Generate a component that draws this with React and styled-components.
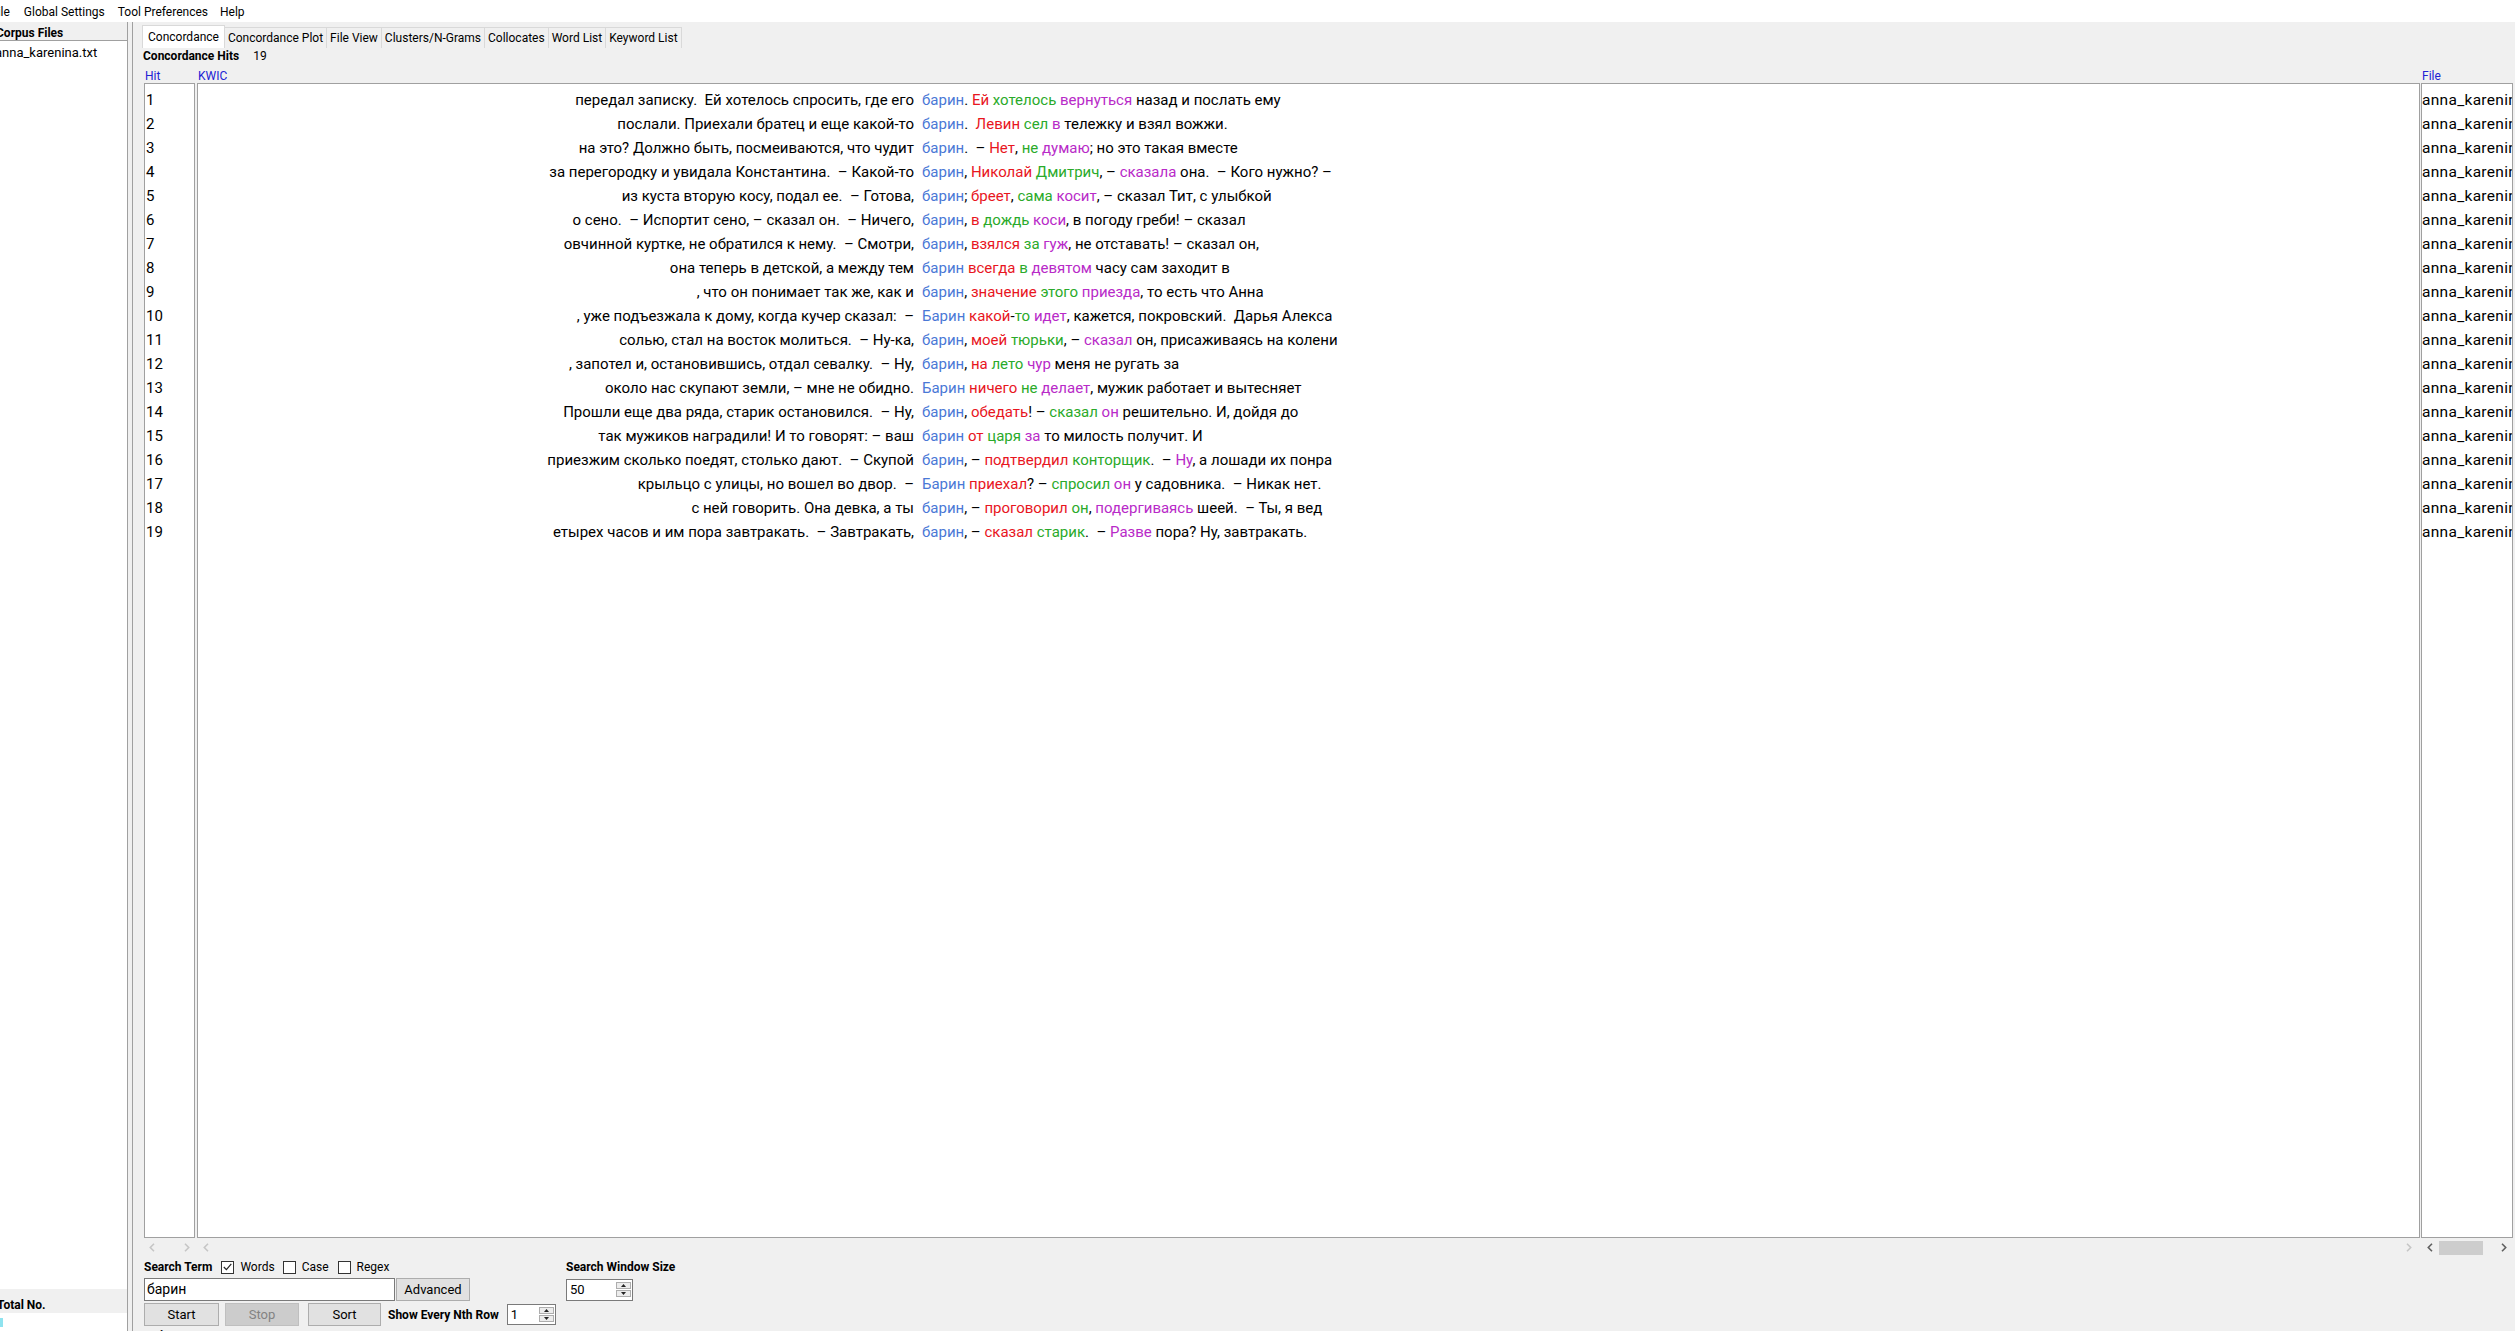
import React from 'react';
import styled, { createGlobalStyle } from 'styled-components';

const GlobalStyle = createGlobalStyle`
  * { box-sizing: border-box; }
  html, body { margin: 0; padding: 0; width: 2515px; height: 1331px; overflow: hidden; background: #f0f0f0; }
  body { font-family: Roboto, "Noto Sans", Arial, sans-serif; color: #000; }
  #root { height: 100%; }
`;

const C = {
  hit: '#4a78d6',
  r: '#e8161e',
  g: '#2aaa2a',
  m: '#b82ac8',
  head: '#2222d4',
};

const rows = [
  ['передал записку.  Ей хотелось спросить, где его', 'барин', '. [r:Ей] [g:хотелось] [m:вернуться] назад и послать ему'],
  ['послали. Приехали братец и еще какой-то', 'барин', '.  [r:Левин] [g:сел] [m:в] тележку и взял вожжи.'],
  ['на это? Должно быть, посмеиваются, что чудит', 'барин', '.  – [r:Нет], [g:не] [m:думаю]; но это такая вместе'],
  ['за перегородку и увидала Константина.  – Какой-то', 'барин', ', [r:Николай] [g:Дмитрич], – [m:сказала] она.  – Кого нужно? –'],
  ['из куста вторую косу, подал ее.  – Готова,', 'барин', '; [r:бреет], [g:сама] [m:косит], – сказал Тит, с улыбкой'],
  ['о сено.  – Испортит сено, – сказал он.  – Ничего,', 'барин', ', [r:в] [g:дождь] [m:коси], в погоду греби! – сказал'],
  ['овчинной куртке, не обратился к нему.  – Смотри,', 'барин', ', [r:взялся] [g:за] [m:гуж], не отставать! – сказал он,'],
  ['она теперь в детской, а между тем', 'барин', ' [r:всегда] [g:в] [m:девятом] часу сам заходит в'],
  [', что он понимает так же, как и', 'барин', ', [r:значение] [g:этого] [m:приезда], то есть что Анна'],
  [', уже подъезжала к дому, когда кучер сказал:  –', 'Барин', ' [r:какой]-[g:то] [m:идет], кажется, покровский.  Дарья Алекса'],
  ['солью, стал на восток молиться.  – Ну-ка,', 'барин', ', [r:моей] [g:тюрьки], – [m:сказал] он, присаживаясь на колени'],
  [', запотел и, остановившись, отдал севалку.  – Ну,', 'барин', ', [r:на] [g:лето] [m:чур] меня не ругать за'],
  ['около нас скупают земли, – мне не обидно.', 'Барин', ' [r:ничего] [g:не] [m:делает], мужик работает и вытесняет'],
  ['Прошли еще два ряда, старик остановился.  – Ну,', 'барин', ', [r:обедать]! – [g:сказал] [m:он] решительно. И, дойдя до'],
  ['так мужиков наградили! И то говорят: – ваш', 'барин', ' [r:от] [g:царя] [m:за] то милость получит. И'],
  ['приезжим сколько поедят, столько дают.  – Скупой', 'барин', ', – [r:подтвердил] [g:конторщик].  – [m:Ну], а лошади их понра'],
  ['крыльцо с улицы, но вошел во двор.  –', 'Барин', ' [r:приехал]? – [g:спросил] [m:он] у садовника.  – Никак нет.'],
  ['с ней говорить. Она девка, а ты', 'барин', ', – [r:проговорил] [g:он], [m:подергиваясь] шеей.  – Ты, я вед'],
  ['етырех часов и им пора завтракать.  – Завтракать,', 'барин', ', – [r:сказал] [g:старик].  – [m:Разве] пора? Ну, завтракать.'],
];

function parseRight(s) {
  const out = [];
  const re = /\[(r|g|m):([^\]]+)\]/g;
  let last = 0;
  let m;
  while ((m = re.exec(s))) {
    if (m.index > last) out.push({ t: s.slice(last, m.index) });
    out.push({ t: m[2], c: m[1] });
    last = re.lastIndex;
  }
  if (last < s.length) out.push({ t: s.slice(last) });
  return out;
}

/* ---------- window frame ---------- */
const Window = styled.div`
  width: 2515px;
  height: 1331px;
  display: flex;
  flex-direction: column;
  overflow: hidden;
`;

const MenuBar = styled.div`
  height: 22px;
  flex: none;
  background: #ffffff;
  display: flex;
  align-items: center;
  padding-top: 3px;
  margin-left: -16px;
  font-size: 12px;
`;

const MenuItem = styled.div`
  padding: 0 ${p => p.$px || 7}px;
  line-height: 19px;
  color: #000;
`;

const Body = styled.div`
  flex: 1;
  min-height: 0;
  display: flex;
`;

/* ---------- left panel ---------- */
const LeftPanel = styled.div`
  width: 128px;
  flex: none;
  display: flex;
  flex-direction: column;
  border-right: 1px solid #a0a0a0;
  overflow: hidden;
`;

const PanelHeader = styled.div`
  height: 19px;
  flex: none;
  padding-top: 4px;
  border-bottom: 1px solid #a0a0a0;
  font-size: 12px;
  font-weight: 700;
  line-height: 14px;
  margin-left: -4px;
  white-space: nowrap;
`;

const FileList = styled.div`
  flex: 1;
  background: #fff;
  padding-top: 4px;
  font-size: 13px;
  line-height: 16px;
  white-space: nowrap;
`;

const FileName = styled.div`
  margin-left: -5px;
`;

const TotalBand = styled.div`
  height: 24px;
  flex: none;
  display: flex;
  align-items: flex-end;
  padding-bottom: 1px;
  font-size: 12px;
  font-weight: 700;
  line-height: 14px;
  margin-left: -3px;
  white-space: nowrap;
`;

const TotalList = styled.div`
  height: 18px;
  flex: none;
  background: #fff;
  padding-top: 5px;
`;

const CyanMark = styled.div`
  width: 3px;
  height: 9px;
  background: #8fe3ef;
`;

const Splitter = styled.div`
  width: 4px;
  flex: none;
`;

/* ---------- main pane ---------- */
const MainPane = styled.div`
  flex: 1;
  min-width: 0;
  display: flex;
  flex-direction: column;
  border-left: 1px solid #a0a0a0;
  padding: 0 2px 0 11px;
`;

const TabBar = styled.div`
  height: 26px;
  flex: none;
  display: flex;
  align-items: flex-end;
  margin-left: -1px;
`;

const Tab = styled.div`
  height: ${p => (p.$active ? '23px' : '21px')};
  padding: 0 ${p => (p.$active ? '5px' : '3px')};
  display: flex;
  align-items: center;
  font-size: 12px;
  background: ${p => (p.$active ? '#ffffff' : '#f0f0f0')};
  border: 1px solid #d9d9d9;
  border-bottom: none;
  margin-left: -1px;
  white-space: nowrap;
  position: relative;
  z-index: ${p => (p.$active ? 1 : 0)};
`;

const HitsLine = styled.div`
  height: 16px;
  flex: none;
  display: flex;
  align-items: center;
  gap: 14px;
  font-size: 12px;
  margin-left: -1px;
`;

const Bold = styled.span`
  font-weight: 700;
  margin-left: ${p => p.$ml || 0}px;
`;

const Table = styled.div`
  flex: 1;
  min-height: 0;
  display: flex;
`;

const Column = styled.div`
  display: flex;
  flex-direction: column;
  width: ${p => (p.$w ? `${p.$w}px` : 'auto')};
  flex: ${p => (p.$w ? 'none' : '1')};
  margin-left: ${p => p.$ml || 0}px;
  min-width: 0;
`;

const ColLabel = styled.div`
  height: 19px;
  flex: none;
  display: flex;
  align-items: flex-end;
  font-size: 12px;
  line-height: 14px;
  color: ${C.head};
  padding-left: 1px;
`;

const Box = styled.div`
  flex: 1;
  min-height: 0;
  background: #fff;
  border: 1px solid #a0a0a0;
  padding-top: 4px;
  overflow: hidden;
  font-size: ${p => p.$fs || 15}px;
`;

const HitRow = styled.div`
  height: 24px;
  line-height: 24px;
  padding-left: 1px;
`;

const KwicRow = styled.div`
  height: 24px;
  line-height: 24px;
  display: grid;
  grid-template-columns: 721px 1fr;
  white-space: pre;
`;

const LeftCtx = styled.div`
  text-align: right;
  padding-right: 5px;
  overflow: hidden;
`;

const RightCtx = styled.div`
  padding-left: 3px;
  overflow: hidden;
`;

const Word = styled.span`
  color: ${p => (p.$c ? C[p.$c] : 'inherit')};
`;

const FileRow = styled.div`
  height: 24px;
  line-height: 24px;
  white-space: nowrap;
  overflow: hidden;
  letter-spacing: 0.3px;
`;

const ScrollRow = styled.div`
  height: 19px;
  flex: none;
  display: flex;
  align-items: center;
  justify-content: space-between;
  padding: 0 ${p => p.$pr || 5}px 0 ${p => p.$pl || 5}px;
`;

const ScrollThumb = styled.div`
  width: 44px;
  height: 14px;
  background: #cdcdcd;
  margin-left: 3px;
  margin-right: auto;
`;

const ScrollGroup = styled.div`
  display: flex;
  align-items: center;
  flex: 1;
  margin-left: 3px;
`;

function Chevron({ dir, color }) {
  return (
    <svg width="6" height="9" viewBox="0 0 6 9">
      <path
        d={dir === 'left' ? 'M5 0.8 L1.3 4.5 L5 8.2' : 'M1 0.8 L4.7 4.5 L1 8.2'}
        fill="none"
        stroke={color}
        strokeWidth="1.6"
      />
    </svg>
  );
}

/* ---------- controls ---------- */
const Controls = styled.div`
  height: 74px;
  flex: none;
  display: flex;
  overflow: hidden;
  padding-top: 1px;
`;

const LeftControls = styled.div`
  width: 422px;
  flex: none;
  display: flex;
  flex-direction: column;
  gap: 2px;
`;

const RightControls = styled.div`
  display: flex;
  flex-direction: column;
  gap: 2px;
`;

const CtrlRow = styled.div`
  height: ${p => p.$h || 23}px;
  flex: none;
  display: flex;
  align-items: center;
  font-size: 12px;
  white-space: nowrap;
`;

const CheckLabel = styled.label`
  display: flex;
  align-items: center;
  gap: 6px;
  margin-left: ${p => p.$ml || 9}px;
  font-size: 12px;
`;

const CheckBox = styled.span`
  width: 13px;
  height: 13px;
  border: 1px solid #333;
  background: #fff;
  display: flex;
  align-items: center;
  justify-content: center;
`;

const TextInput = styled.div`
  width: 251px;
  height: 23px;
  border: 1px solid #7a7a7a;
  background: #fff;
  font-size: 14px;
  line-height: 21px;
  padding-left: 2px;
`;

const Button = styled.div`
  width: ${p => p.$w}px;
  height: 23px;
  margin-left: ${p => p.$ml || 0}px;
  background: ${p => (p.$disabled ? '#cccccc' : '#e1e1e1')};
  border: 1px solid ${p => (p.$disabled ? '#bfbfbf' : '#adadad')};
  color: ${p => (p.$disabled ? '#838383' : '#000')};
  font-size: 13px;
  display: flex;
  align-items: center;
  justify-content: center;
`;

const Spin = styled.div`
  width: ${p => p.$w}px;
  height: ${p => p.$h || 22}px;
  margin-left: ${p => p.$ml || 0}px;
  border: 1px solid #7a7a7a;
  background: #fff;
  display: flex;
  align-items: center;
  font-size: 13px;
  padding-left: 3px;
`;

const SpinValue = styled.div`
  flex: 1;
`;

const SpinButtons = styled.div`
  width: 15px;
  margin-right: 1px;
  display: flex;
  flex-direction: column;
  gap: 1px;
`;

const SpinBtn = styled.div`
  height: 7px;
  border: 1px solid #adadad;
  background: #ececec;
  display: flex;
  align-items: center;
  justify-content: center;
`;

function Arrow({ up }) {
  return (
    <svg width="5" height="3" viewBox="0 0 5 3">
      <path d={up ? 'M0 3 L2.5 0 L5 3 Z' : 'M0 0 L2.5 3 L5 0 Z'} fill="#222" />
    </svg>
  );
}

function SpinBox({ value, w, h, ml }) {
  return (
    <Spin $w={w} $h={h} $ml={ml}>
      <SpinValue>{value}</SpinValue>
      <SpinButtons>
        <SpinBtn><Arrow up /></SpinBtn>
        <SpinBtn><Arrow /></SpinBtn>
      </SpinButtons>
    </Spin>
  );
}

const tabs = ['Concordance', 'Concordance Plot', 'File View', 'Clusters/N-Grams', 'Collocates', 'Word List', 'Keyword List'];

export default function App() {
  return (
    <>
      <GlobalStyle />
      <Window>
        <MenuBar>
          <MenuItem>File</MenuItem>
          <MenuItem>Global Settings</MenuItem>
          <MenuItem $px={6}>Tool Preferences</MenuItem>
          <MenuItem $px={6}>Help</MenuItem>
        </MenuBar>
        <Body>
          <LeftPanel>
            <PanelHeader>Corpus Files</PanelHeader>
            <FileList>
              <FileName>anna_karenina.txt</FileName>
            </FileList>
            <TotalBand>Total No.</TotalBand>
            <TotalList>
              <CyanMark />
            </TotalList>
          </LeftPanel>
          <Splitter />
          <MainPane>
            <TabBar>
              {tabs.map((t, i) => (
                <Tab key={t} $active={i === 0}>{t}</Tab>
              ))}
            </TabBar>
            <HitsLine>
              <Bold>Concordance Hits</Bold>
              <span>19</span>
            </HitsLine>
            <Table>
              <Column $w={51}>
                <ColLabel>Hit</ColLabel>
                <Box>
                  {rows.map((r, i) => (
                    <HitRow key={i}>{i + 1}</HitRow>
                  ))}
                </Box>
                <ScrollRow $pl={5} $pr={5}>
                  <Chevron dir="left" color="#c6c6c6" />
                  <Chevron dir="right" color="#c6c6c6" />
                </ScrollRow>
              </Column>
              <Column $ml={2}>
                <ColLabel>KWIC</ColLabel>
                <Box>
                  {rows.map((r, i) => (
                    <KwicRow key={i}>
                      <LeftCtx>{r[0]}</LeftCtx>
                      <RightCtx>
                        <Word $c="hit">{r[1]}</Word>
                        {parseRight(r[2]).map((s, j) => (
                          <Word key={j} $c={s.c}>{s.t}</Word>
                        ))}
                      </RightCtx>
                    </KwicRow>
                  ))}
                </Box>
                <ScrollRow $pl={6} $pr={8}>
                  <Chevron dir="left" color="#c6c6c6" />
                  <Chevron dir="right" color="#c6c6c6" />
                </ScrollRow>
              </Column>
              <Column $w={92} $ml={1}>
                <ColLabel>File</ColLabel>
                <Box $fs={15.5}>
                  {rows.map((r, i) => (
                    <FileRow key={i}>anna_karenina.txt</FileRow>
                  ))}
                </Box>
                <ScrollRow $pl={6} $pr={6}>
                  <Chevron dir="left" color="#606060" />
                  <ScrollGroup>
                    <ScrollThumb />
                  </ScrollGroup>
                  <Chevron dir="right" color="#606060" />
                </ScrollRow>
              </Column>
            </Table>
            <Controls>
              <LeftControls>
                <CtrlRow $h={18}>
                  <Bold>Search Term</Bold>
                  <CheckLabel $ml={9}>
                    <CheckBox>
                      <svg width="9" height="8" viewBox="0 0 9 8">
                        <path d="M0.8 4 L3.4 6.6 L8.3 0.9" fill="none" stroke="#222" strokeWidth="1.2" />
                      </svg>
                    </CheckBox>
                    Words
                  </CheckLabel>
                  <CheckLabel $ml={8}>
                    <CheckBox />
                    Case
                  </CheckLabel>
                  <CheckLabel $ml={9}>
                    <CheckBox />
                    Regex
                  </CheckLabel>
                </CtrlRow>
                <CtrlRow>
                  <TextInput>барин</TextInput>
                  <Button $w={74} $ml={1}>Advanced</Button>
                </CtrlRow>
                <CtrlRow>
                  <Button $w={75}>Start</Button>
                  <Button $w={74} $ml={6} $disabled>Stop</Button>
                  <Button $w={73} $ml={9}>Sort</Button>
                  <Bold $ml={7}>Show Every Nth Row</Bold>
                  <SpinBox value="1" w={49} h={21} ml={8} />
                </CtrlRow>
                <CtrlRow $h={16}>
                  <Bold>Kwic Sort</Bold>
                </CtrlRow>
              </LeftControls>
              <RightControls>
                <CtrlRow $h={18}>
                  <Bold>Search Window Size</Bold>
                </CtrlRow>
                <CtrlRow>
                  <SpinBox value="50" w={67} h={22} />
                </CtrlRow>
              </RightControls>
            </Controls>
          </MainPane>
        </Body>
      </Window>
    </>
  );
}
